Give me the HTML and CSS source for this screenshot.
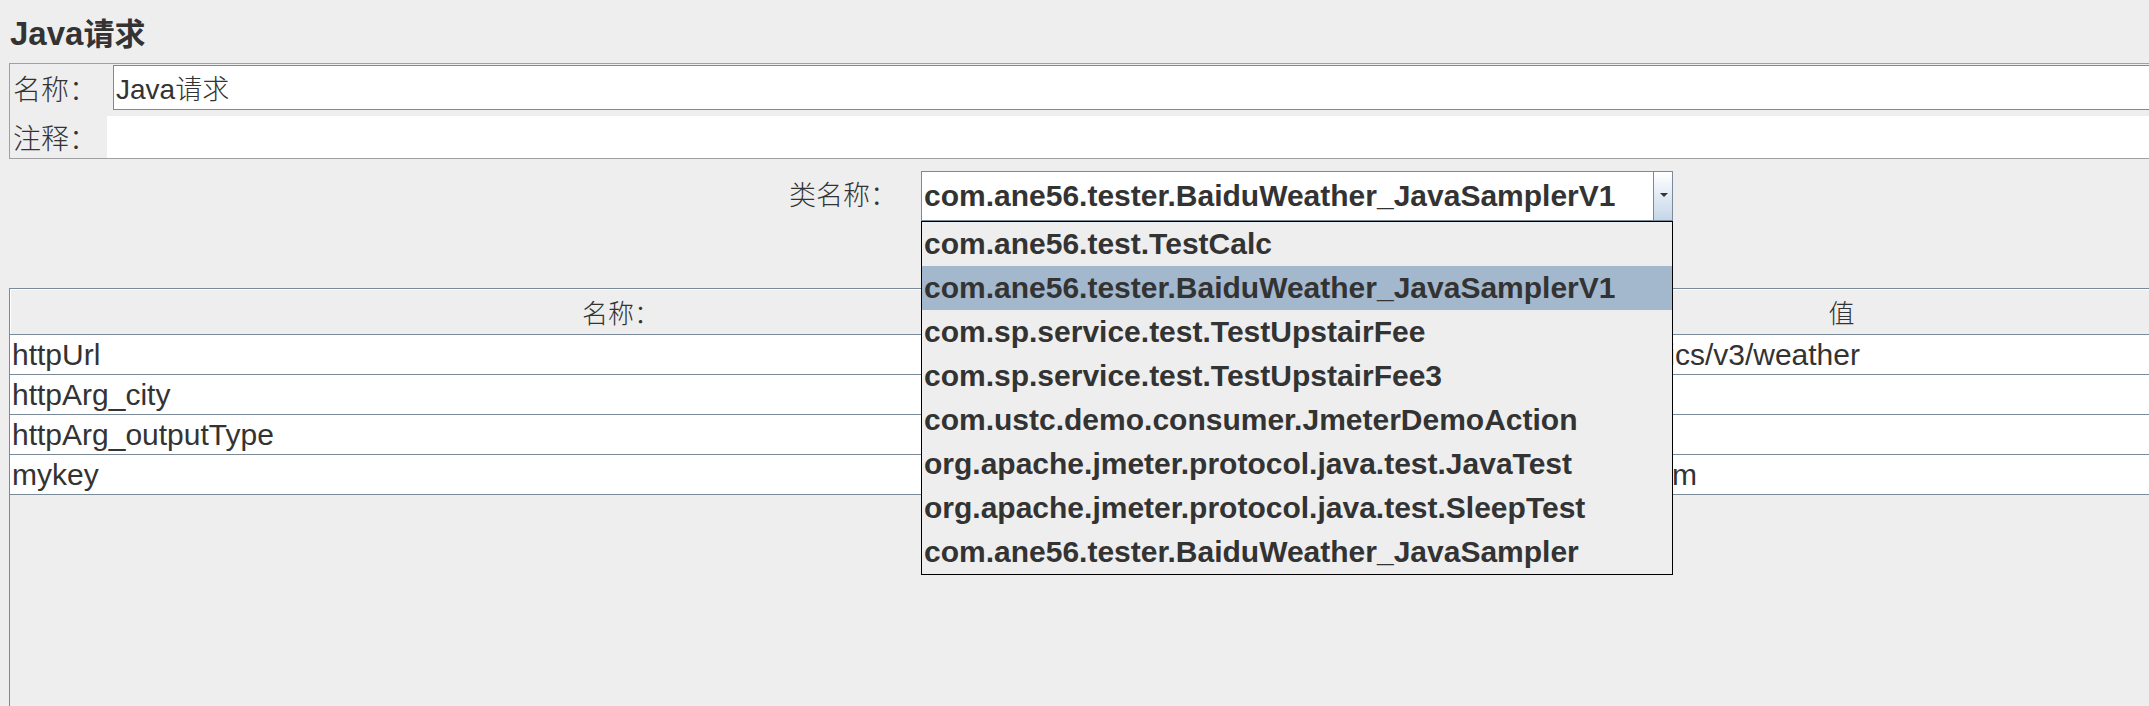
FILE: index.html
```html
<!DOCTYPE html>
<html lang="zh-CN">
<head>
<meta charset="utf-8">
<title>Java请求</title>
<link rel="stylesheet" href="styles.css">
</head>
<body>
<div class="page">
  <h1 class="title">Java<span class="cjk-bold">请求</span></h1>

  <div class="panel">
    <div class="frow">
      <span class="flabel flabel-name">名称：</span>
      <div class="field field-bordered">Java<span class="cjk">请求</span></div>
    </div>
    <div class="frow frow-comment">
      <span class="flabel flabel-comment">注释：</span>
      <div class="field field-plain"></div>
    </div>
  </div>

  <div class="class-row">
    <span class="clabel">类名称：</span>
    <div class="combo">
      <div class="combo-value">com.ane56.tester.BaiduWeather_JavaSamplerV1</div>
      <div class="combo-btn">
        <svg width="8" height="4" viewBox="0 0 8 4"><polygon points="0,0 8,0 4,4" fill="#333"/></svg>
      </div>
      <ul class="popup">
        <li>com.ane56.test.TestCalc</li>
        <li class="selected">com.ane56.tester.BaiduWeather_JavaSamplerV1</li>
        <li>com.sp.service.test.TestUpstairFee</li>
        <li>com.sp.service.test.TestUpstairFee3</li>
        <li>com.ustc.demo.consumer.JmeterDemoAction</li>
        <li>org.apache.jmeter.protocol.java.test.JavaTest</li>
        <li>org.apache.jmeter.protocol.java.test.SleepTest</li>
        <li>com.ane56.tester.BaiduWeather_JavaSampler</li>
      </ul>
    </div>
  </div>

  <div class="scroll">
    <div class="thead">
      <div class="th">名称：</div>
      <div class="th">值</div>
    </div>
    <div class="tr">
      <div class="td">httpUrl</div>
      <div class="td">http://api.map.baidu.com/telematics/v3/weather</div>
    </div>
    <div class="tr">
      <div class="td">httpArg_city</div>
      <div class="td"></div>
    </div>
    <div class="tr">
      <div class="td">httpArg_outputType</div>
      <div class="td"></div>
    </div>
    <div class="tr">
      <div class="td">mykey</div>
      <div class="td">ane56-jmeter_tester1@ane56.com</div>
    </div>
  </div>
</div>
</body>
</html>
```

FILE: styles.css
```css
html, body {
  margin: 0;
  padding: 0;
  background: #eeeeee;
  height: 706px;
  overflow: hidden;
}

body {
  font-family: "Liberation Sans", Arial, "Noto Sans CJK SC", sans-serif;
  color: #333333;
}

.page {
  margin-left: 9px;
  width: 2444px;
}

.title {
  margin: 0 0 11px 0;
  padding: 12px 0 0 1px;
  height: 40px;
  font-size: 33px;
  line-height: 40px;
  font-weight: bold;
  color: #333333;
}

.cjk-bold {
  font-family: "Noto Sans CJK SC", sans-serif;
  font-weight: bold;
  font-size: 31px;
}

.cjk {
  font-family: "Noto Sans CJK SC", sans-serif;
  font-weight: 300;
  font-size: 27px;
}

/* name / comment panel */
.panel {
  border: 1px solid #a0a0a0;
  height: 94px;
  box-sizing: content-box;
}

.frow {
  display: flex;
  align-items: center;
  margin-top: 1px;
  height: 45px;
}

.frow-comment {
  margin-top: 6px;
  height: 42px;
}

.flabel {
  box-sizing: border-box;
  padding-left: 3px;
  font-family: "Noto Sans CJK SC", sans-serif;
  font-weight: 300;
  font-size: 28px;
  line-height: 40px;
  color: #333333;
  flex: none;
}

.flabel-name { width: 103px; }
.flabel-comment { width: 97px; }

.field {
  flex: 1;
  height: 100%;
  box-sizing: border-box;
  background: #ffffff;
}

.field-bordered {
  border: 1px solid #7a8a99;
  padding-left: 2px;
  font-size: 28px;
  line-height: 43px;
}

/* class name combo */
.class-row {
  display: flex;
  justify-content: center;
  align-items: center;
  gap: 24px;
  margin-top: 12px;
}

.clabel {
  font-family: "Noto Sans CJK SC", sans-serif;
  font-weight: 300;
  font-size: 27px;
  line-height: 40px;
  color: #333333;
  margin-top: -4px;
}

.combo {
  position: relative;
  width: 752px;
  height: 50px;
  box-sizing: border-box;
  border: 1px solid #7a8a99;
  background: #ffffff;
  display: flex;
}

.combo-value {
  flex: 1;
  padding: 0 0 1px 2px;
  font-size: 30px;
  font-weight: bold;
  line-height: 47px;
  white-space: nowrap;
  overflow: hidden;
}

.combo-btn {
  width: 19px;
  box-sizing: border-box;
  border-left: 1px solid #7a8a99;
  background: linear-gradient(#ffffff, #c5d6e9);
  display: flex;
  align-items: center;
  justify-content: center;
  padding-bottom: 3px;
}

.combo-btn svg {
  display: block;
  margin-left: 1px;
}

.popup {
  position: absolute;
  left: -1px;
  top: calc(100% + 1px);
  width: 752px;
  box-sizing: border-box;
  margin: 0;
  padding: 0;
  list-style: none;
  border: 1px solid #000000;
  background: #eeeeee;
  z-index: 10;
}

.popup li {
  height: 44px;
  box-sizing: border-box;
  padding: 0 0 1px 2px;
  font-size: 30px;
  font-weight: bold;
  line-height: 43px;
  white-space: nowrap;
  color: #333333;
}

.popup li.selected {
  background: #a3b8cc;
}

/* parameter table */
.scroll {
  margin-top: 67px;
  height: 420px;
  border-top: 1px solid #7a8a99;
  border-left: 1px solid #7a8a99;
  background: #eeeeee;
}

.thead,
.tr {
  display: grid;
  grid-template-columns: 1221px 1221px;
}

.thead {
  height: 46px;
  box-sizing: border-box;
  border-top: 1px solid #ffffff;
  border-bottom: 1px solid #7a8a99;
  background: #eeeeee;
}

.th {
  border-left: 1px solid #ffffff;
  text-align: center;
  font-family: "Noto Sans CJK SC", sans-serif;
  font-weight: 300;
  font-size: 26px;
  line-height: 44px;
  color: #333333;
}

.th + .th {
  border-left: none;
}

.tr {
  height: 40px;
  box-sizing: border-box;
  border-bottom: 1px solid #7a8a99;
  background: #ffffff;
}

.td {
  padding-left: 2px;
  font-size: 30px;
  line-height: 39px;
  white-space: nowrap;
  overflow: hidden;
  color: #333333;
}
```
